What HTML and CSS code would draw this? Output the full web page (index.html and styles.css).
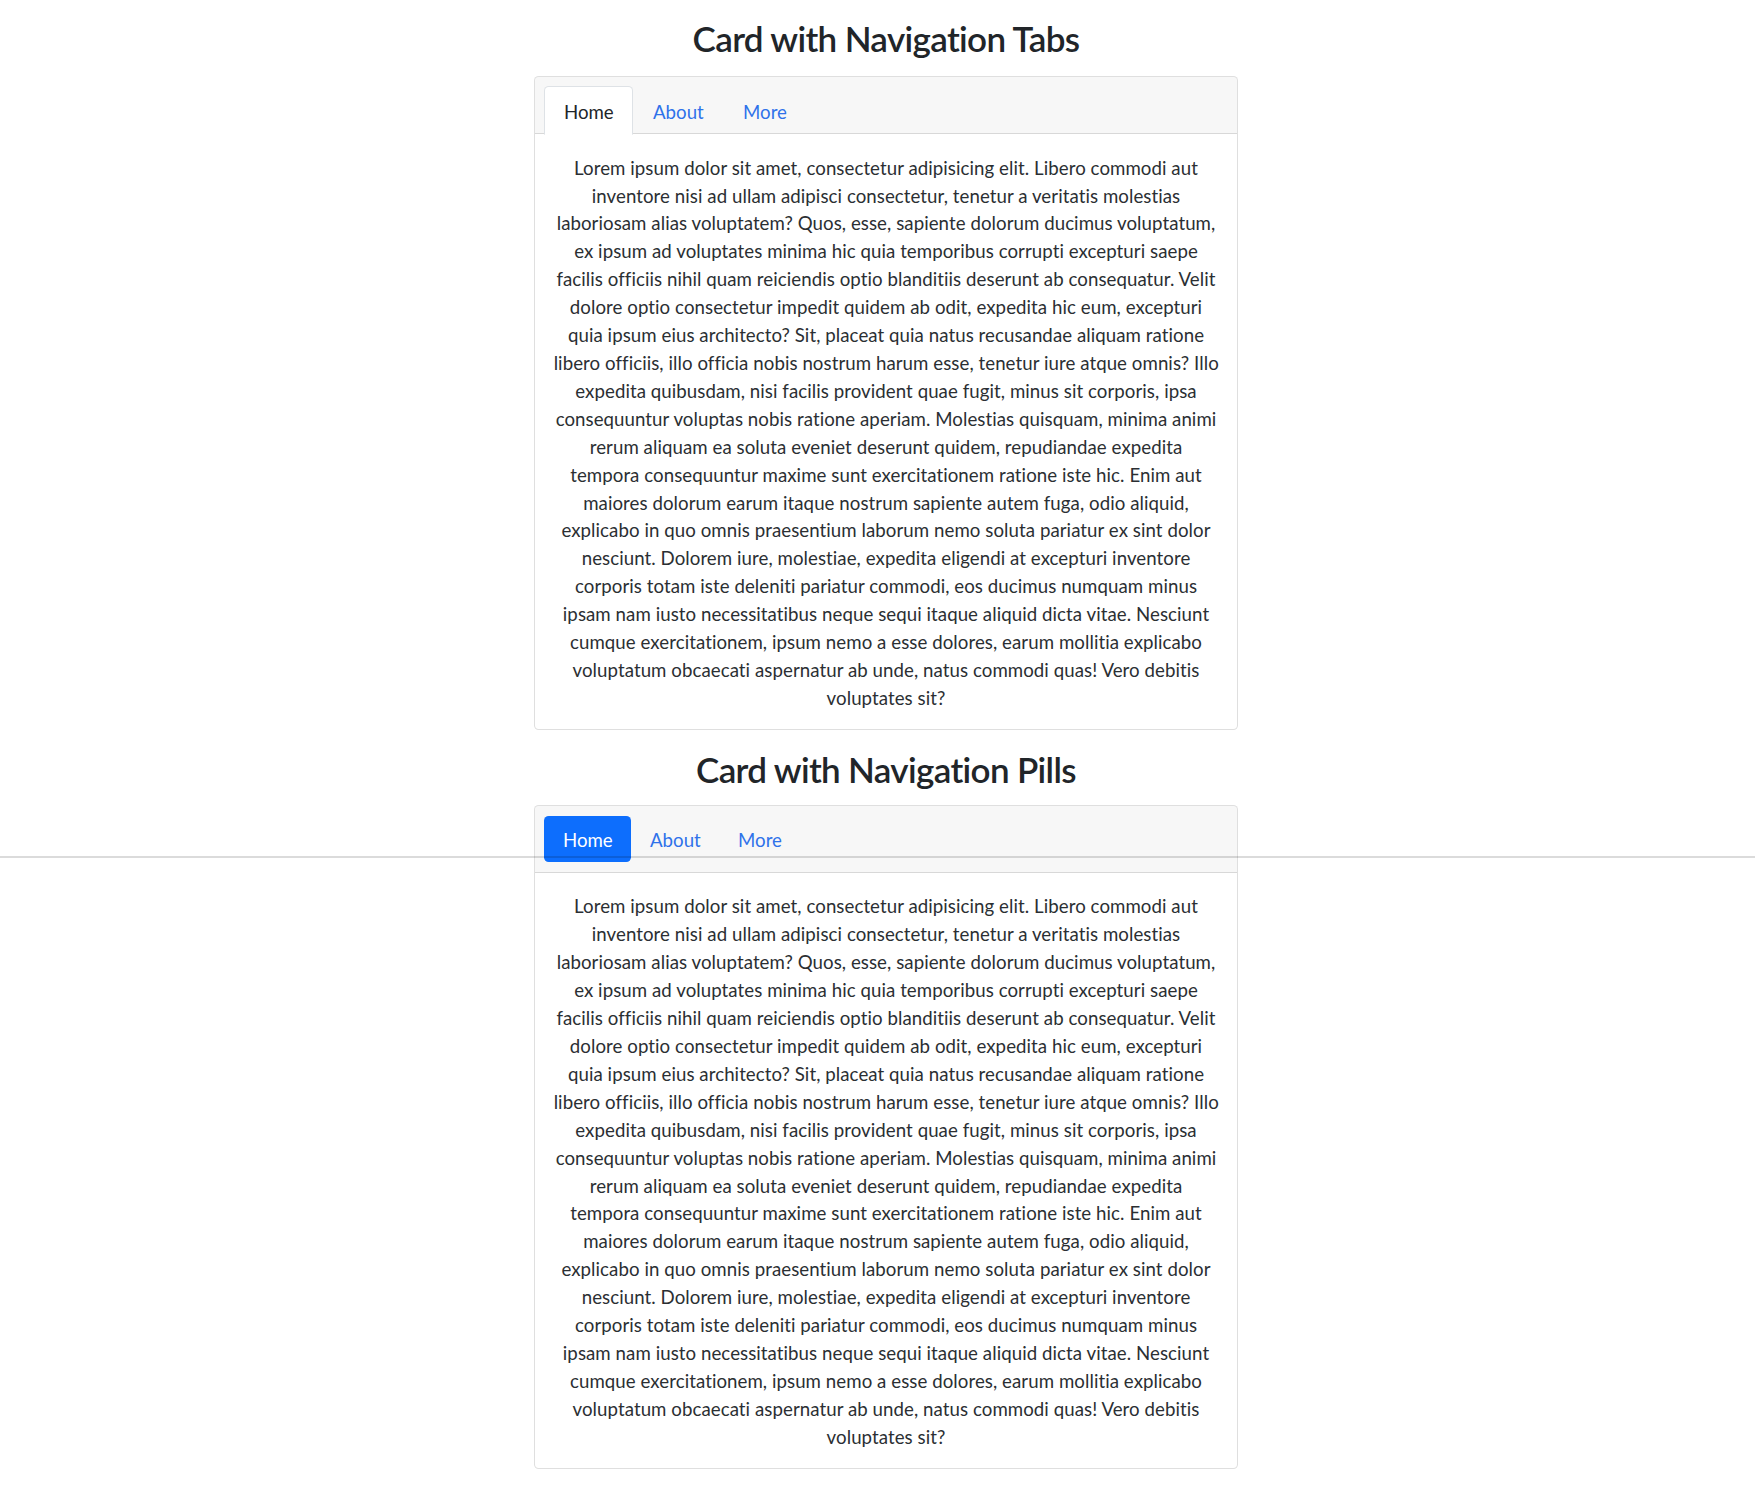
FILE: index.html
```html
<!DOCTYPE html>
<html lang="en">
<head>
<meta charset="utf-8">
<title>Cards with Navigation</title>
<link rel="stylesheet" href="styles.css">
</head>
<body>
<div class="page">
  <h2 class="title">Card with Navigation Tabs</h2>
  <div class="card">
    <div class="card-header">
      <ul class="nav nav-tabs">
        <li class="nav-item"><a class="nav-link active" href="#">Home</a></li>
        <li class="nav-item"><a class="nav-link" href="#">About</a></li>
        <li class="nav-item"><a class="nav-link" href="#">More</a></li>
      </ul>
    </div>
    <div class="card-body">
      <p class="card-text">Lorem ipsum dolor sit amet, consectetur adipisicing elit. Libero commodi aut<br>inventore nisi ad ullam adipisci consectetur, tenetur a veritatis molestias<br>laboriosam alias voluptatem? Quos, esse, sapiente dolorum ducimus voluptatum,<br>ex ipsum ad voluptates minima hic quia temporibus corrupti excepturi saepe<br>facilis officiis nihil quam reiciendis optio blanditiis deserunt ab consequatur. Velit<br>dolore optio consectetur impedit quidem ab odit, expedita hic eum, excepturi<br>quia ipsum eius architecto? Sit, placeat quia natus recusandae aliquam ratione<br>libero officiis, illo officia nobis nostrum harum esse, tenetur iure atque omnis? Illo<br>expedita quibusdam, nisi facilis provident quae fugit, minus sit corporis, ipsa<br>consequuntur voluptas nobis ratione aperiam. Molestias quisquam, minima animi<br>rerum aliquam ea soluta eveniet deserunt quidem, repudiandae expedita<br>tempora consequuntur maxime sunt exercitationem ratione iste hic. Enim aut<br>maiores dolorum earum itaque nostrum sapiente autem fuga, odio aliquid,<br>explicabo in quo omnis praesentium laborum nemo soluta pariatur ex sint dolor<br>nesciunt. Dolorem iure, molestiae, expedita eligendi at excepturi inventore<br>corporis totam iste deleniti pariatur commodi, eos ducimus numquam minus<br>ipsam nam iusto necessitatibus neque sequi itaque aliquid dicta vitae. Nesciunt<br>cumque exercitationem, ipsum nemo a esse dolores, earum mollitia explicabo<br>voluptatum obcaecati aspernatur ab unde, natus commodi quas! Vero debitis<br>voluptates sit?</p>
    </div>
  </div>

  <h2 class="title">Card with Navigation Pills</h2>
  <div class="card">
    <div class="card-header">
      <ul class="nav nav-pills">
        <li class="nav-item"><a class="nav-link active" href="#">Home</a></li>
        <li class="nav-item"><a class="nav-link" href="#">About</a></li>
        <li class="nav-item"><a class="nav-link" href="#">More</a></li>
      </ul>
    </div>
    <div class="card-body">
      <p class="card-text">Lorem ipsum dolor sit amet, consectetur adipisicing elit. Libero commodi aut<br>inventore nisi ad ullam adipisci consectetur, tenetur a veritatis molestias<br>laboriosam alias voluptatem? Quos, esse, sapiente dolorum ducimus voluptatum,<br>ex ipsum ad voluptates minima hic quia temporibus corrupti excepturi saepe<br>facilis officiis nihil quam reiciendis optio blanditiis deserunt ab consequatur. Velit<br>dolore optio consectetur impedit quidem ab odit, expedita hic eum, excepturi<br>quia ipsum eius architecto? Sit, placeat quia natus recusandae aliquam ratione<br>libero officiis, illo officia nobis nostrum harum esse, tenetur iure atque omnis? Illo<br>expedita quibusdam, nisi facilis provident quae fugit, minus sit corporis, ipsa<br>consequuntur voluptas nobis ratione aperiam. Molestias quisquam, minima animi<br>rerum aliquam ea soluta eveniet deserunt quidem, repudiandae expedita<br>tempora consequuntur maxime sunt exercitationem ratione iste hic. Enim aut<br>maiores dolorum earum itaque nostrum sapiente autem fuga, odio aliquid,<br>explicabo in quo omnis praesentium laborum nemo soluta pariatur ex sint dolor<br>nesciunt. Dolorem iure, molestiae, expedita eligendi at excepturi inventore<br>corporis totam iste deleniti pariatur commodi, eos ducimus numquam minus<br>ipsam nam iusto necessitatibus neque sequi itaque aliquid dicta vitae. Nesciunt<br>cumque exercitationem, ipsum nemo a esse dolores, earum mollitia explicabo<br>voluptatum obcaecati aspernatur ab unde, natus commodi quas! Vero debitis<br>voluptates sit?</p>
    </div>
  </div>
</div>
<div class="overlay-rule"></div>
</body>
</html>
```

FILE: styles.css
```css
* { box-sizing: border-box; }

html, body {
  margin: 0;
  padding: 0;
  background: #fff;
}

body {
  font-family: Lato, "Open Sans", "Liberation Sans", sans-serif;
  font-size: 18.67px;
  line-height: 27.9px;
  color: #2b2f33;
  position: relative;
}

.page {
  width: 704px;
  margin: 0 auto;
  position: relative;
  left: 8.5px;
  display: flex;
  flex-direction: column;
}

.title {
  margin: 16px 0 15.2px;
  font-size: 35px;
  line-height: 44.8px;
  letter-spacing: -0.65px;
  font-weight: 600;
  text-align: center;
  color: #212529;
}

.card + .title {
  margin: 16.2px 0 14.1px;
}

.card {
  border: 1px solid rgba(0, 0, 0, 0.125);
  border-radius: 4.67px;
  background: #fff;
  display: flex;
  flex-direction: column;
}

.card-header {
  background: rgba(0, 0, 0, 0.03);
  border-bottom: 1px solid rgba(0, 0, 0, 0.125);
  padding: 9.33px 18.67px;
  border-radius: 3.67px 3.67px 0 0;
}

.nav {
  list-style: none;
  margin: 0 -9.33px;
  padding: 0;
  display: flex;
  line-height: 28px;
}

.nav-link {
  display: block;
  padding: 10.5px 18.67px 8.16px;
  color: #2f72ea;
  text-decoration: none;
  border-radius: 4.67px;
}

.nav-tabs {
  margin-bottom: -10.33px;
}

.nav-tabs .nav-link {
  border: 1px solid transparent;
  border-radius: 4.67px 4.67px 0 0;
  margin-bottom: -1px;
}

.nav-tabs .nav-link.active {
  color: #212529;
  background: #fff;
  border-color: #dee2e6 #dee2e6 #fff;
}

.nav-pills .nav-link.active {
  color: #fff;
  background: #0d6efd;
}

.card-body {
  padding: 20.67px 18.67px 16.67px;
}

.card-text {
  margin: 0;
  text-align: center;
  white-space: nowrap;
  letter-spacing: 0.06px;
}

.overlay-rule {
  position: absolute;
  left: 0;
  right: 0;
  top: 856px;
  height: 2px;
  background: rgba(0, 0, 0, 0.14);
}
```
